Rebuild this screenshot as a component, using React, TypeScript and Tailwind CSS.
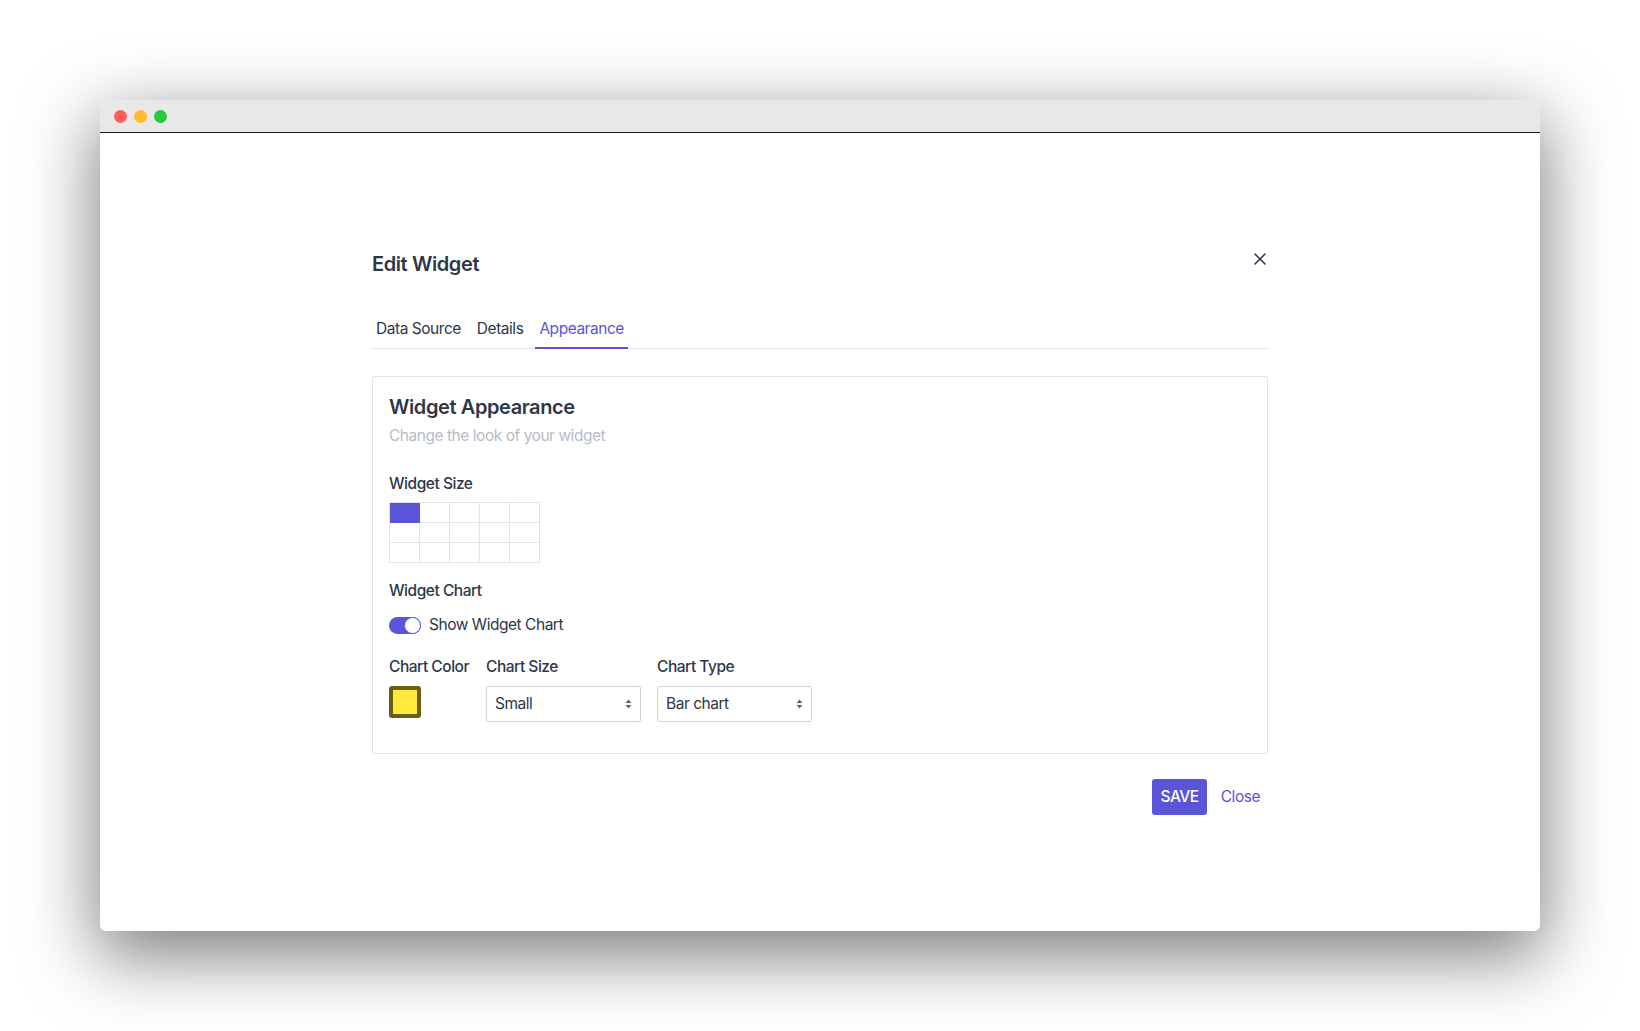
import { useState } from "react";

const tabs = ["Data Source", "Details", "Appearance"];

const body = "text-[15.5px] leading-6 tracking-[-0.03em]";

function SelectBox({ value, options }: { value: string; options: string[] }) {
  return (
    <div className="relative mt-[7px] w-[155px]">
      <select
        defaultValue={value}
        className={`h-[36px] w-full appearance-none rounded-[2px] border border-[#cfd5de] bg-white pl-2 pr-6 text-[#2d3748] outline-none ${body}`}
      >
        {options.map((o) => (
          <option key={o}>{o}</option>
        ))}
      </select>
      <svg
        className="pointer-events-none absolute right-[9px] top-[13px]"
        width="7"
        height="10"
        viewBox="0 0 7 10"
      >
        <path d="M3.5 0.5 L6.5 4 H0.5 Z M3.5 9.5 L6.5 6 H0.5 Z" fill="#5b6574" />
      </svg>
    </div>
  );
}

function SizeGrid() {
  const cells = Array.from({ length: 15 }, (_, i) => i);
  return (
    <div className="mt-[6px] grid w-[151px] grid-cols-5 border-l border-t border-[#e3e3e3]">
      {cells.map((i) => (
        <div
          key={i}
          className={
            i === 0
              ? "h-5 w-[30px] border-b border-r border-[#5a55d8] bg-[#5a55d8]"
              : "h-5 w-[30px] border-b border-r border-[#e3e3e3]"
          }
        />
      ))}
    </div>
  );
}

export default function App() {
  const [tab, setTab] = useState("Appearance");
  const [show, setShow] = useState(true);

  return (
    <div className="min-h-[1031px] w-full bg-white p-[100px] font-['Inter',sans-serif] text-[#2d3748]">
      <div className="flex h-[831px] w-[1440px] flex-col overflow-hidden rounded-[6px] bg-white shadow-[0_22px_70px_4px_rgba(0,0,0,0.5)]">
        {/* title bar */}
        <div className="flex h-[33px] shrink-0 items-center gap-[7px] border-b border-[#1e1e1e] bg-[#e8e8e8] pl-[14px]">
          <span className="h-[13px] w-[13px] rounded-full bg-[#ff5f57]" />
          <span className="h-[13px] w-[13px] rounded-full bg-[#febc2e]" />
          <span className="h-[13px] w-[13px] rounded-full bg-[#28c840]" />
        </div>

        <div className="flex flex-1 justify-center pt-[117px]">
          <div className="w-[896px]">
            <div className="flex items-start justify-between">
              <h1 className="text-[20px] leading-[28px] font-semibold tracking-[-0.02em]">Edit Widget</h1>
              <button className="mt-[3px] mr-[2px]">
                <svg width="12" height="12" viewBox="0 0 12 12">
                  <path d="M1 1 L11 11 M11 1 L1 11" stroke="#2d3748" strokeWidth="1.5" strokeLinecap="round" />
                </svg>
              </button>
            </div>

            <div className="mt-[39px] flex gap-2 border-b border-[#e2e8f0]">
              {tabs.map((t) => (
                <button
                  key={t}
                  onClick={() => setTab(t)}
                  className={
                    t === tab
                      ? `-mb-px border-b-2 border-[#5a55d8] px-1 pb-[6px] text-[#5a55d8] ${body}`
                      : `-mb-px border-b-2 border-transparent px-1 pb-[6px] text-[#2d3748] ${body}`
                  }
                >
                  {t}
                </button>
              ))}
            </div>

            <div className="mt-[27px] rounded-[2px] border border-[#e2e2e2] p-4 pb-[31px]">
              <h2 className="text-[20px] leading-[28px] font-semibold tracking-[-0.02em]">Widget Appearance</h2>
              <p className={`mt-[3px] text-[#b5bcc7] ${body}`}>Change the look of your widget</p>

              <div className={`mt-6 font-medium ${body}`}>Widget Size</div>
              <SizeGrid />

              <div className={`mt-4 font-medium ${body}`}>Widget Chart</div>
              <label className={`mt-[10px] flex items-center gap-2 ${body}`}>
                <button
                  onClick={() => setShow(!show)}
                  className={
                    show
                      ? "flex h-[17px] w-8 justify-end rounded-full bg-[#5a55d8]"
                      : "flex h-[17px] w-8 justify-start rounded-full bg-[#cbd5e0]"
                  }
                >
                  <span className="h-[17px] w-[17px] rounded-full border border-[#5a55d8] bg-white" />
                </button>
                Show Widget Chart
              </label>

              <div className="mt-[18px] flex gap-4">
                <div className="w-[81px]">
                  <div className={`whitespace-nowrap font-medium ${body}`}>Chart Color</div>
                  <div className="mt-[7px] h-8 w-8 rounded-[3px] border-4 border-[#6b5e14] bg-[#ffeb3b]" />
                </div>
                <div>
                  <div className={`font-medium ${body}`}>Chart Size</div>
                  <SelectBox value="Small" options={["Small", "Medium", "Large"]} />
                </div>
                <div>
                  <div className={`font-medium ${body}`}>Chart Type</div>
                  <SelectBox value="Bar chart" options={["Bar chart", "Line chart", "Area chart"]} />
                </div>
              </div>
            </div>

            <div className="mt-[25px] flex items-center justify-end gap-[6px]">
              <button className={`h-9 rounded-[3px] bg-[#5a55d8] px-[8px] font-medium text-white ${body}`}>
                SAVE
              </button>
              <button className={`h-9 px-2 text-[#5a55d8] ${body}`}>Close</button>
            </div>
          </div>
        </div>
      </div>
    </div>
  );
}
